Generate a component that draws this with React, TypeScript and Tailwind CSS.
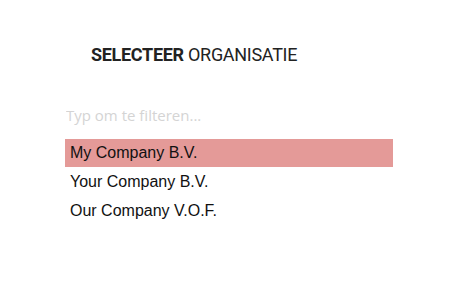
import React from 'react';

const companies = ['My Company B.V.', 'Your Company B.V.', 'Our Company V.O.F.'];

export default function App() {
  const selected = 0;
  return (
    <div className="w-[452px] h-[286px] bg-white">
      <div className="pt-[43px] pl-[91px]">
        <h1 className="text-[18px] leading-[24px] uppercase text-[#222] tracking-[-0.3px]" style={{ fontFamily: 'Roboto, sans-serif' }}>
          <span className="font-bold">Selecteer</span> <span className="font-normal">Organisatie</span>
        </h1>
      </div>
      <div className="ml-[65px] w-[328px] mt-[36px]">
        <input
          type="text"
          placeholder="Typ om te filteren..."
          className="block w-full h-[24px] text-[15px] outline-none placeholder:text-[#d4d4d4] pl-[1px]"
          style={{ fontFamily: '"Open Sans", sans-serif' }}
        />
        <ul className="mt-[12px]" style={{ fontFamily: '"Liberation Sans", Arial, sans-serif' }}>
          {companies.map((c, i) => (
            <li
              key={c}
              className={`h-[28px] mb-[1px] flex items-center pl-[5px] text-[16px] text-[#111] ${i === selected ? 'bg-[#e49a98]' : ''}`}
            >
              {c}
            </li>
          ))}
        </ul>
      </div>
    </div>
  );
}
